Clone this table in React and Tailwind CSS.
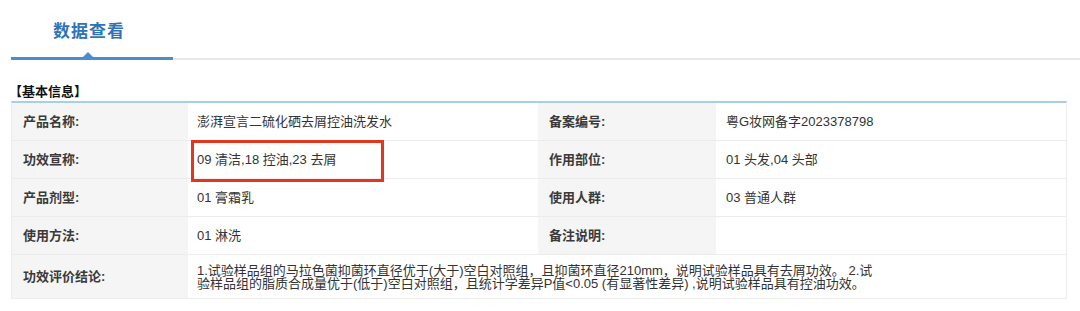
import React from 'react';

const rows = [
  { l1: '产品名称:', v1: '澎湃宣言二硫化硒去屑控油洗发水', l2: '备案编号:', v2: '粤G妆网备字2023378798' },
  { l1: '功效宣称:', v1: '09 清洁,18 控油,23 去屑', l2: '作用部位:', v2: '01 头发,04 头部', marked: true },
  { l1: '产品剂型:', v1: '01 膏霜乳', l2: '使用人群:', v2: '03 普通人群' },
  { l1: '使用方法:', v1: '01 淋洗', l2: '备注说明:', v2: '' },
];

export default function App() {
  return (
    <div
      className="w-[1080px] h-[311px] bg-white text-[#333] overflow-hidden"
      style={{ fontFamily: '"Liberation Sans", "Noto Sans CJK SC", sans-serif' }}
    >
      {/* Tab header */}
      <div className="relative h-[60px]">
        <div className="absolute left-[53px] top-[19px] text-[17px] font-bold text-[#2f74b5] tracking-[1px] leading-[26px]">
          数据查看
        </div>
        <div className="absolute left-[11px] right-0 top-[58px] h-[2px] bg-[#e8e8e8]" />
        <div className="absolute left-[11px] w-[162px] top-[57px] h-[3px] bg-[#4a8dcc]" />
        <div className="absolute left-[82px] top-[52px] w-0 h-0 border-l-[6px] border-r-[6px] border-b-[6px] border-l-transparent border-r-transparent border-b-[#4a8dcc]" />
      </div>

      {/* Section */}
      <div className="pl-[11px] pr-[13px]">
        <div className="pt-[23px] h-[41px] text-[13px] font-bold text-[#111] leading-[18px] -ml-[2px]">
          【基本信息】
        </div>
        <div className="w-[1056px] border-t-2 border-t-[#a9cfe6] border-x border-[#ececec]">
          {rows.map((r, i) => (
            <div key={i} className="grid grid-cols-[176px_350px_178px_350px] h-[38px] border-b border-[#ececec] text-[13px]">
              <div className="bg-[#f5f5f5] flex items-center pl-[11px] font-bold text-[#3a3a3a]">{r.l1}</div>
              <div className="relative flex items-center pl-[9px]">
                {r.v1}
                {r.marked && (
                  <div className="absolute left-[3px] top-[-1px] w-[193px] h-[42px] border-[3px] border-[#e2371f]" />
                )}
              </div>
              <div className="bg-[#f5f5f5] flex items-center pl-[11px] font-bold text-[#3a3a3a]">{r.l2}</div>
              <div className="flex items-center pl-[10px]">{r.v2}</div>
            </div>
          ))}
          <div className="grid grid-cols-[176px_878px] h-[44px] border-b border-[#ececec]">
            <div className="bg-[#f5f5f5] flex items-center pl-[11px] font-bold text-[13px] text-[#3a3a3a]">功效评价结论:</div>
            <div className="flex items-center pl-[9px] text-[13px] leading-[13px]">
              <p>
                1.试验样品组的马拉色菌抑菌环直径优于(大于)空白对照组，且抑菌环直径210mm，说明试验样品具有去屑功效。 2.试
                <br />
                验样品组的脂质合成量优于(低于)空白对照组，且统计学差异P值&lt;0.05 (有显著性差异) ,说明试验样品具有控油功效。
              </p>
            </div>
          </div>
        </div>
      </div>
    </div>
  );
}
